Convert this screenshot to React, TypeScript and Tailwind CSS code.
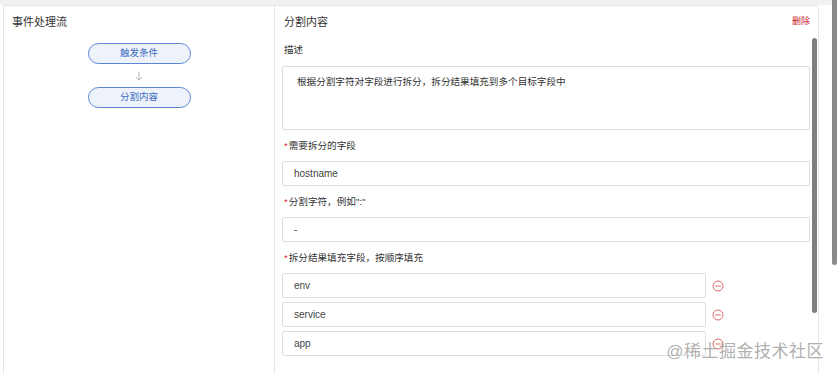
import { ReactNode } from "react";

const fontStack = {
  fontFamily: '"Liberation Sans", "Noto Sans CJK SC", sans-serif',
};

function FlowNode({ label }: { label: string }) {
  return (
    <div className="w-[103px] h-[21px] rounded-full border border-[#5b86d6] bg-[#eef3fb] flex items-center justify-center text-[9.5px] text-[#3b6cc0]">
      {label}
    </div>
  );
}

function DownArrow() {
  return (
    <svg width="8" height="10" viewBox="0 0 8 10">
      <line x1="4" y1="0.5" x2="4" y2="9" stroke="#b5b5b5" strokeWidth="1" />
      <polyline points="1,6 4,9 7,6" fill="none" stroke="#b5b5b5" strokeWidth="1" />
    </svg>
  );
}

function Label({ children, required }: { children: ReactNode; required?: boolean }) {
  return (
    <div className="h-[31px] flex items-center text-[9.6px] text-[#333] pl-[2px] pt-[1px]">
      {required && <span className="text-[#e0262b] mr-[1px]">*</span>}
      {children}
    </div>
  );
}

function Field({ value }: { value: string }) {
  return (
    <div className="h-[25px] border border-[#dedede] rounded-[2px] bg-white flex items-center pl-[11px] text-[10px] text-[#444]">
      {value}
    </div>
  );
}

function MinusIcon() {
  return (
    <svg width="12" height="12" viewBox="0 0 12 12" className="shrink-0">
      <circle cx="6" cy="6" r="5" fill="none" stroke="#e06a6a" strokeWidth="1" />
      <line x1="3.3" y1="6" x2="8.7" y2="6" stroke="#e06a6a" strokeWidth="1" />
    </svg>
  );
}

export default function App() {
  const targets = ["env", "service", "app"];

  return (
    <div
      className="w-[837px] h-[374px] overflow-hidden bg-white relative flex flex-col"
      style={fontStack}
    >
      <div className="h-[5px] bg-[#f1f1f1] shrink-0" />
      <div className="flex grow ml-[3px] w-[816px] border-l border-t border-r border-[#e6e6e6] rounded-tr-[4px]">
        {/* left: event flow */}
        <div className="w-[271px] border-r border-[#e6e6e6] shrink-0">
          <div className="h-[32px] flex items-center pl-[8px] text-[11px] text-[#333]">
            事件处理流
          </div>
          <div className="flex flex-col items-center pt-[5px]">
            <FlowNode label="触发条件" />
            <div className="h-[23px] flex items-center">
              <DownArrow />
            </div>
            <FlowNode label="分割内容" />
          </div>
        </div>

        {/* right: split config */}
        <div className="grow relative">
          <div className="h-[32px] flex items-center justify-between pl-[9px] pr-[8px]">
            <span className="text-[11px] text-[#333]">分割内容</span>
            <span className="text-[9px] text-[#c8202a]">删除</span>
          </div>
          <div className="pl-[7px] pr-[8px]">
            <div className="h-[24px] flex items-center text-[9.6px] text-[#333] pl-[2px]">
              描述
            </div>
            <div className="h-[64px] mt-[4px] border border-[#dedede] rounded-[2px] pl-[14px] pt-[6px] text-[9.6px] leading-[18px] text-[#333]">
              根据分割字符对字段进行拆分，拆分结果填充到多个目标字段中
            </div>
            <Label required>需要拆分的字段</Label>
            <Field value="hostname" />
            <Label required>分割字符，例如":"</Label>
            <Field value="-" />
            <Label required>拆分结果填充字段，按顺序填充</Label>
            <div className="flex flex-col gap-[4px]">
              {targets.map((t) => (
                <div key={t} className="flex items-center">
                  <div className="w-[424px]">
                    <Field value={t} />
                  </div>
                  <div className="ml-[6px]">
                    <MinusIcon />
                  </div>
                </div>
              ))}
            </div>
          </div>
          <div className="absolute right-[1px] top-[32px] w-[5px] h-[275px] rounded-full bg-[#7f7f7f]" />
        </div>
      </div>

      <div className="absolute right-0 top-0 w-[5px] h-[265px] rounded-b-full bg-[#8a8a8a]" />
      <div className="absolute right-[13px] bottom-[10px] text-[17px] text-[#9a9a9a]/80 tracking-[0.5px]">
        @稀土掘金技术社区
      </div>
    </div>
  );
}
